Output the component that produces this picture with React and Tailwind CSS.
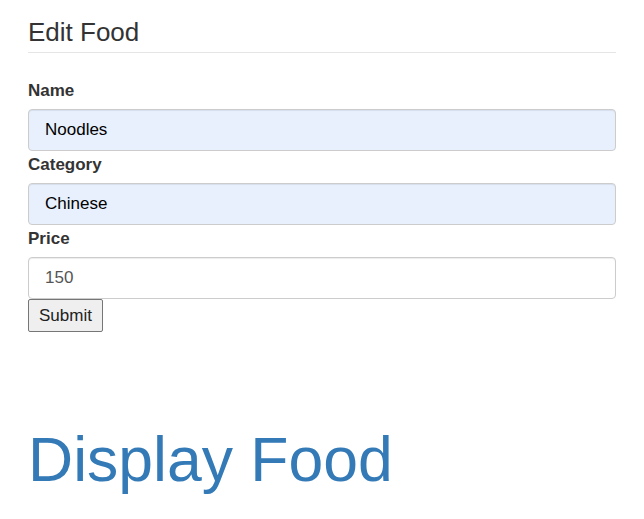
import React, { useState } from 'react';

const Field = ({ label, value, onChange, autofilled }) => (
  <div>
    <label className="block text-[17px] leading-[24px] font-bold text-[#333] pt-[2px] mb-[6px]">{label}</label>
    <input
      type="text"
      value={value}
      onChange={(e) => onChange(e.target.value)}
      className={`block w-full h-[42px] px-[16px] text-[17px] border border-[#ccc] rounded-[4px] shadow-[inset_0_1px_1px_rgba(0,0,0,0.075)] outline-none ${
        autofilled ? 'bg-[#e8f0fe] text-black' : 'bg-white text-[#555]'
      }`}
    />
  </div>
);

const App = () => {
  const [name, setName] = useState('Noodles');
  const [category, setCategory] = useState('Chinese');
  const [price, setPrice] = useState('150');

  return (
    <div className="w-[644px] h-[519px] bg-white px-[28px] font-['Liberation_Sans',Arial,sans-serif] text-[#333] overflow-hidden">
      <div className="mt-[18px] pb-[5px] border-b border-[#e5e5e5]">
        <h3 className="text-[26px] leading-[29px] font-normal">Edit Food</h3>
      </div>

      <form className="mt-[24px]" onSubmit={(e) => e.preventDefault()}>
        <Field label="Name" value={name} onChange={setName} autofilled />
        <Field label="Category" value={category} onChange={setCategory} autofilled />
        <Field label="Price" value={price} onChange={setPrice} />
        <button
          type="submit"
          className="block h-[33px] px-[10px] text-[17px] leading-none text-[#222] bg-[#efefef] border border-[#767676] rounded-[2px]"
        >
          Submit
        </button>
      </form>

      <h1 className="mt-[93px] text-[62.5px] leading-[68px] font-normal text-[#337ab7]">Display Food</h1>
    </div>
  );
};

export default App;
